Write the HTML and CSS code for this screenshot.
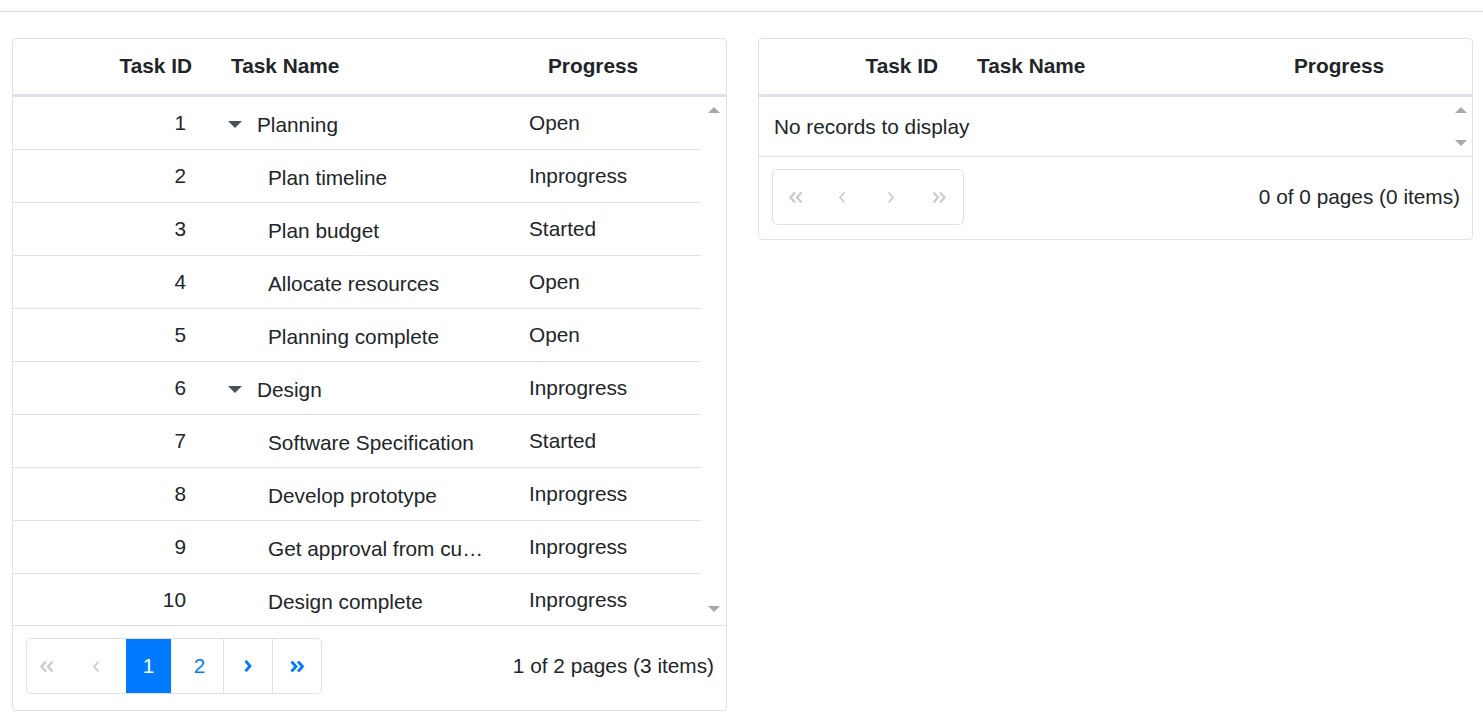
FILE: index.html
```html
<!DOCTYPE html>
<html>
<head>
<meta charset="utf-8">
<link rel="stylesheet" href="styles.css">
</head>
<body>
<div class="topbar"></div>
<div class="page">
  <div class="grid">
    <div class="ghead">
      <div class="hc c-id">Task ID</div>
      <div class="hc c-name">Task Name</div>
      <div class="hc c-prog">Progress</div>
    </div>
    <div class="gbody tall">
      <div class="rows">
        <div class="row"><div class="c-id">1</div><div class="c-name parent"><span class="exp"></span>Planning</div><div class="c-prog">Open</div></div>
        <div class="row"><div class="c-id">2</div><div class="c-name child">Plan timeline</div><div class="c-prog">Inprogress</div></div>
        <div class="row"><div class="c-id">3</div><div class="c-name child">Plan budget</div><div class="c-prog">Started</div></div>
        <div class="row"><div class="c-id">4</div><div class="c-name child">Allocate resources</div><div class="c-prog">Open</div></div>
        <div class="row"><div class="c-id">5</div><div class="c-name child">Planning complete</div><div class="c-prog">Open</div></div>
        <div class="row"><div class="c-id">6</div><div class="c-name parent"><span class="exp"></span>Design</div><div class="c-prog">Inprogress</div></div>
        <div class="row"><div class="c-id">7</div><div class="c-name child">Software Specification</div><div class="c-prog">Started</div></div>
        <div class="row"><div class="c-id">8</div><div class="c-name child">Develop prototype</div><div class="c-prog">Inprogress</div></div>
        <div class="row"><div class="c-id">9</div><div class="c-name child">Get approval from customer</div><div class="c-prog">Inprogress</div></div>
        <div class="row"><div class="c-id">10</div><div class="c-name child">Design complete</div><div class="c-prog">Inprogress</div></div>
      </div>
      <div class="vscroll"><span class="up"></span><span class="down"></span></div>
    </div>
    <div class="pager">
      <div class="pgroup">
        <span class="pb dis w-first"><svg class="dbl" width="15" height="11" viewBox="0 0 15 11"><polyline points="7,0.5 2.5,5.5 7,10.5"/><polyline points="13.5,0.5 9,5.5 13.5,10.5"/></svg></span>
        <span class="pb dis w-prev"><svg class="sgl" width="8" height="11" viewBox="0 0 8 11"><polyline points="6.5,0.5 2,5.5 6.5,10.5"/></svg></span>
        <span class="pb active w-1">1</span>
        <span class="pb num w-2 sep">2</span>
        <span class="pb en w-next sep"><svg class="sgl" width="8" height="12" viewBox="0 0 8 12"><polyline points="1.5,0.8 6,6 1.5,11.2"/></svg></span>
        <span class="pb en w-last"><svg class="dbl" width="15" height="11" viewBox="0 0 15 11"><polyline points="1.5,0.5 6,5.5 1.5,10.5"/><polyline points="8,0.5 12.5,5.5 8,10.5"/></svg></span>
      </div>
      <div class="pinfo">1 of 2 pages (3 items)</div>
    </div>
  </div>

  <div class="grid">
    <div class="ghead">
      <div class="hc c-id">Task ID</div>
      <div class="hc c-name">Task Name</div>
      <div class="hc c-prog">Progress</div>
    </div>
    <div class="gbody short">
      <div class="rows empty">No records to display</div>
      <div class="vscroll"><span class="up"></span><span class="down"></span></div>
    </div>
    <div class="pager small">
      <div class="pgroup">
        <span class="pb dis e1"><svg class="dbl" width="15" height="11" viewBox="0 0 15 11"><polyline points="7,0.5 2.5,5.5 7,10.5"/><polyline points="13.5,0.5 9,5.5 13.5,10.5"/></svg></span>
        <span class="pb dis e2"><svg class="sgl" width="8" height="11" viewBox="0 0 8 11"><polyline points="6.5,0.5 2,5.5 6.5,10.5"/></svg></span>
        <span class="pb dis e3"><svg class="sgl" width="8" height="11" viewBox="0 0 8 11"><polyline points="1.5,0.5 6,5.5 1.5,10.5"/></svg></span>
        <span class="pb dis e4"><svg class="dbl" width="15" height="11" viewBox="0 0 15 11"><polyline points="1.5,0.5 6,5.5 1.5,10.5"/><polyline points="8,0.5 12.5,5.5 8,10.5"/></svg></span>
      </div>
      <div class="pinfo">0 of 0 pages (0 items)</div>
    </div>
  </div>
</div>
</body>
</html>
```

FILE: styles.css
```css
* { box-sizing: border-box; }
html, body { margin: 0; padding: 0; background: #ffffff; }
body {
  font-family: "Liberation Sans", Arial, sans-serif;
  font-size: 20.8px;
  color: #212529;
}
.topbar {
  height: 12px;
  border-bottom: 1px solid #dcdcdc;
}
.page {
  display: flex;
  align-items: flex-start;
  gap: 31px;
  padding: 26px 0 0 12px;
}
.grid {
  width: 715px;
  border: 1px solid #e0e2e6;
  border-radius: 4px;
  overflow: hidden;
  background: #fff;
}
.ghead {
  display: grid;
  grid-template-columns: 197px 303px 1fr;
  height: 58px;
  padding-bottom: 2px;
  border-bottom: 3px solid #dee2e6;
  align-items: center;
  font-weight: bold;
}
.ghead .c-id { text-align: right; padding-right: 18px; }
.ghead .c-name { padding-left: 21px; }
.ghead .c-prog { padding-left: 35px; }

.gbody { display: flex; }
.gbody.tall { height: 528px; overflow: hidden; }
.gbody.short { height: 59px; }
.rows { width: 688px; }
.row {
  display: grid;
  grid-template-columns: 197px 303px 188px;
  height: 53px;
  border-bottom: 1px solid #dee2e6;
  align-items: center;
}
.row .c-id { text-align: right; padding-right: 24px; }
.row .c-name {
  white-space: nowrap;
  overflow: hidden;
  text-overflow: ellipsis;
  padding-right: 20px;
  padding-top: 3px;
  display: block;
}
.row .c-name.parent { padding-left: 18px; }
.row .c-name.child { padding-left: 58px; }
.row .c-prog { padding-left: 16px; }
.exp {
  display: inline-block;
  width: 0; height: 0;
  border-left: 7px solid transparent;
  border-right: 7px solid transparent;
  border-top: 7px solid #495057;
  margin-right: 15px;
  vertical-align: 4px;
}
.rows.empty {
  display: flex;
  align-items: center;
  padding-left: 15px;
  height: 59px;
}
.vscroll {
  flex: 1;
  display: flex;
  flex-direction: column;
  justify-content: space-between;
  align-items: center;
  padding: 10px 0 13px 0;
}
.gbody.short .vscroll { padding: 10px 0 10px 2px; }
.up, .down {
  display: block;
  width: 0; height: 0;
  border-left: 6px solid transparent;
  border-right: 6px solid transparent;
}
.up { border-bottom: 6px solid #a8a8a8; }
.down { border-top: 6px solid #a8a8a8; }

.pager {
  border-top: 1px solid #dee2e6;
  display: flex;
  align-items: center;
  justify-content: space-between;
  padding: 12px 12px 16px 13px;
}
.pager.small { padding-bottom: 14px; }
.pgroup {
  display: flex;
  height: 56px;
  border: 1px solid #dee2e6;
  border-radius: 5px;
  overflow: hidden;
}
.pb {
  display: flex;
  align-items: center;
  justify-content: center;
  height: 100%;
}
.pb svg { fill: none; stroke-linecap: butt; stroke-linejoin: miter; }
.pb svg.dbl { stroke-width: 2.4; }
.pb svg.sgl { stroke-width: 1.8; }
.pb.dis svg { stroke: #c8ccd3; }
.pb.en svg { stroke: #007bff; }
.pb.en svg.sgl { stroke-width: 2.8; }
.pb.en svg.dbl { stroke-width: 2.8; }
.pb.active { background: #007bff; color: #fff; }
.pb.num { color: #007bff; }
.pb.sep { border-right: 1px solid #dee2e6; }
.w-first { width: 39px; }
.w-prev { width: 60px; }
.w-1 { width: 45px; }
.w-2 { width: 53px; padding-left: 5px; }
.w-next { width: 49px; }
.w-last { width: 48px; }
.e1 { width: 44px; }
.e2 { width: 49px; }
.e3 { width: 49px; }
.e4 { width: 48px; }
```
